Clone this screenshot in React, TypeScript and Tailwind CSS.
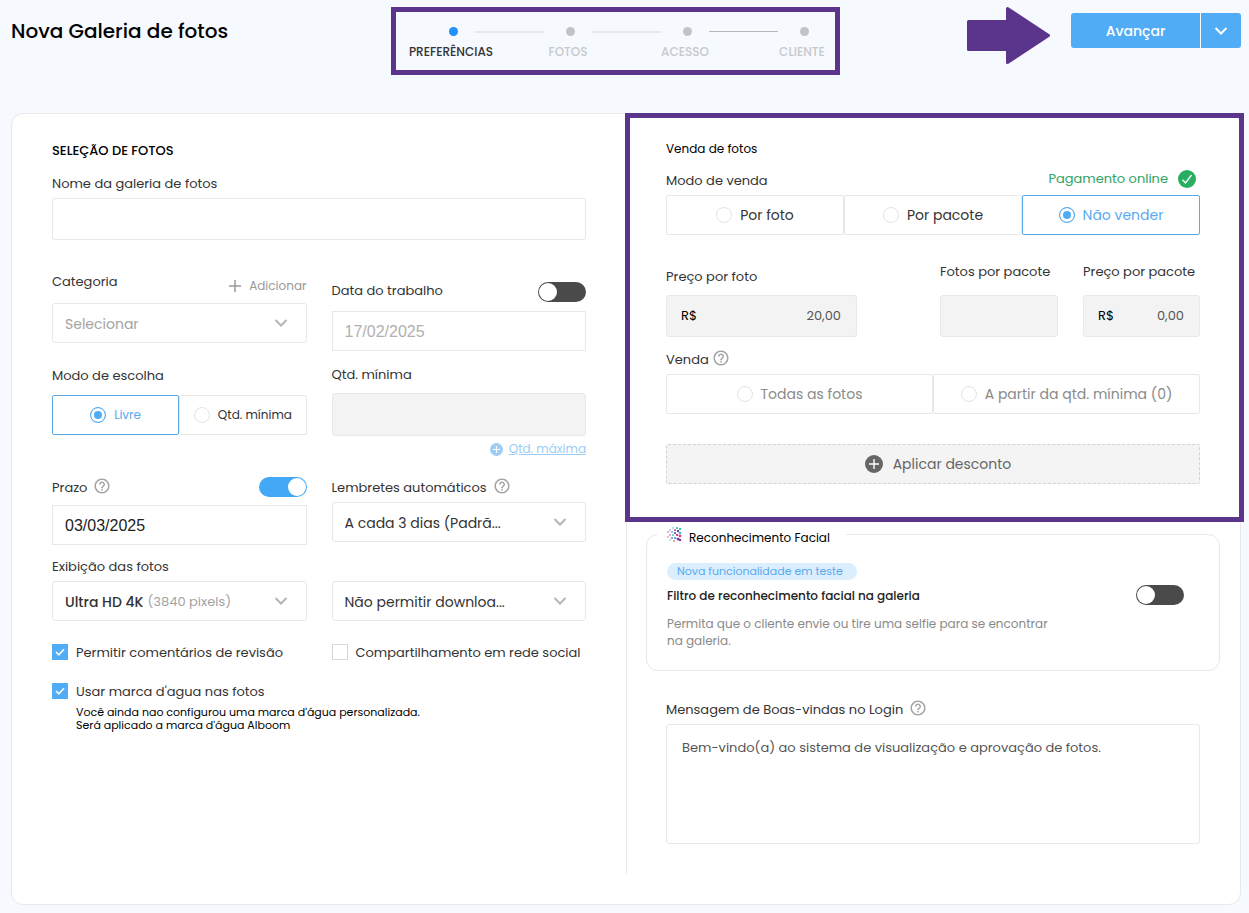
import { useState } from 'react'
import type { ReactNode } from 'react'
import { MdHelpOutline } from 'react-icons/md'
import clsx from 'clsx'

const STEPS = ['PREFERÊNCIAS', 'FOTOS', 'ACESSO', 'CLIENTE']

// Dots of the facial recognition mark: x, y, radius, colour
const FACE_DOTS: [number, number, number, string][] = [
    [6, 1, 0.8, '#7fd0d8'],
    [10, 1, 1, '#4bb8c9'],
    [13, 2, 1.1, '#3fc1b5'],
    [3, 3, 0.8, '#9a9ad8'],
    [8, 3, 1, '#e0559b'],
    [11, 4, 1.1, '#5a4fa0'],
    [1, 5, 0.8, '#e7799f'],
    [5, 5, 0.9, '#6fb7e8'],
    [8, 6, 1, '#7a4ba8'],
    [13, 6, 1.2, '#49b5e0'],
    [3, 8, 0.8, '#c25fae'],
    [6, 8, 0.9, '#5cc9c1'],
    [10, 8, 1.1, '#d9488f'],
    [13, 9, 1.2, '#e2457c'],
    [1, 10, 0.8, '#e98a9a'],
    [5, 11, 0.9, '#7f7ed0'],
    [8, 11, 1, '#3f9fd6'],
    [11, 12, 1.2, '#6a3d98'],
    [13, 13, 1.1, '#8a2f86'],
    [7, 14, 0.8, '#e0559b'],
    [3, 13, 0.8, '#86cfe0'],
]

function Chevron({ className }: { className?: string }) {
    return (
        <svg viewBox="0 0 14 8" className={clsx('w-3.5 h-2 shrink-0 pointer-events-none', className)} fill="none" stroke="currentColor" strokeWidth="2">
            <path d="M1.5 1 7 6.5 12.5 1" />
        </svg>
    )
}

function PlusCircle({ className }: { className: string }) {
    return (
        <svg viewBox="0 0 18 18" className={className}>
            <circle cx="9" cy="9" r="9" fill="currentColor" />
            <path d="M9 4v10M4 9h10" stroke="#fff" strokeWidth="1.4" />
        </svg>
    )
}

function Help() {
    return <MdHelpOutline className="w-[18px] h-[18px] text-[#a3a3a3]" />
}

function Label({ htmlFor, children }: { htmlFor?: string; children: ReactNode }) {
    return (
        <label htmlFor={htmlFor} className="text-[13px] leading-[22px] text-[#333]">
            {children}
        </label>
    )
}

function Toggle({ id, label, defaultChecked }: { id: string; label: string; defaultChecked?: boolean }) {
    return (
        <input
            id={id}
            type="checkbox"
            role="switch"
            aria-label={label}
            defaultChecked={defaultChecked}
            className="appearance-none w-12 h-5 shrink-0 p-px rounded-full bg-[#4a4a4a] cursor-pointer before:block before:w-[18px] before:h-[18px] before:rounded-full before:bg-white checked:bg-[#43a9f7] checked:before:translate-x-7"
        />
    )
}

type SelectBoxProps = {
    id: string
    option: string
    label?: string
    hint?: string
    className?: string
}

function SelectBox({ id, option, label, hint, className }: SelectBoxProps) {
    return (
        <div className={clsx('flex items-center h-10 pl-3 pr-[18px] border border-[#e8e8e8] rounded-[3px] bg-white text-sm', className)}>
            <select
                id={id}
                aria-label={label}
                className={clsx('appearance-none min-w-0 pt-0.5 bg-transparent outline-none', hint ? 'field-sizing-content font-medium' : 'flex-1')}
            >
                <option>{option}</option>
            </select>
            {hint && <span className="ml-1 pt-0.5 text-[13px] text-[#a3a3a3]">{hint}</span>}
            <Chevron className="ml-auto text-[#b5b5b5]" />
        </div>
    )
}

type RadioGroupProps = {
    name: string
    legend: string
    options: string[]
    initial?: string
    small?: boolean
    muted?: boolean
    className?: string
}

function RadioGroup({ name, legend, options, initial, small, muted, className }: RadioGroupProps) {
    const [value, setValue] = useState(initial)

    return (
        <div role="radiogroup" aria-label={legend} className={clsx('flex', className)}>
            {options.map((option) => (
                <label
                    key={option}
                    className={clsx(
                        'flex flex-1 items-center justify-center gap-2 h-10 border rounded-[2px] cursor-pointer whitespace-nowrap',
                        small ? 'text-xs' : 'text-sm',
                        value === option ? 'border-[#5aa9e6] text-[#5aaaf0]' : 'border-[#e8e8e8]',
                        value !== option && (muted ? 'text-[#8a8a8a]' : 'text-[#333]')
                    )}
                >
                    <input
                        type="radio"
                        name={name}
                        checked={value === option}
                        onChange={() => setValue(option)}
                        className="appearance-none w-4 h-4 rounded-full border border-[#e3e3e3] bg-white checked:border-[#4facf5] checked:bg-[#4facf5] checked:shadow-[inset_0_0_0_3px_#fff]"
                    />
                    {option}
                </label>
            ))}
        </div>
    )
}

function CheckItem({ label, defaultChecked }: { label: string; defaultChecked?: boolean }) {
    return (
        <label className="flex items-start gap-2 text-[13px] leading-[22px] text-[#333] whitespace-nowrap cursor-pointer">
            <span className="grid w-4 h-5 place-items-center">
                <input
                    type="checkbox"
                    defaultChecked={defaultChecked}
                    className="peer [grid-area:1/1] appearance-none w-4 h-4 border border-[#d6d6d6] checked:border-[#4facf5] checked:bg-[#4facf5]"
                />
                <svg viewBox="0 0 10 8" className="[grid-area:1/1] w-2.5 h-2 invisible peer-checked:visible pointer-events-none" fill="none" stroke="#fff" strokeWidth="1.6">
                    <path d="m1 4 2.8 2.8L9 1.2" />
                </svg>
            </span>
            {label}
        </label>
    )
}

function PriceBox({ id, value }: { id: string; value: string }) {
    return (
        <div className="flex items-center h-[42px] pl-3.5 pr-[15px] border border-[#e8e8e8] rounded-[3px] bg-[#f3f3f3] text-[13px]">
            <span className="text-black">R$</span>
            <input id={id} type="text" disabled defaultValue={value} className="min-w-0 flex-1 bg-transparent text-right text-[#555]" />
        </div>
    )
}

function Header() {
    return (
        <header className="flex items-start h-[113px] pt-[7px]">
            <h1 className="w-[380px] pt-2 text-xl leading-8 font-medium text-black">Nova Galeria de fotos</h1>

            {/* Steps */}
            <ol className="flex w-[449px] h-[68px] shrink-0 pl-[27px] pt-[14px] border-[5px] border-[#5b358c]">
                {STEPS.map((step, i) => (
                    <li key={step} className="flex">
                        {i > 0 && (
                            <span
                                className={clsx(
                                    'w-[69px] mt-[5px] -ml-2 -mr-1 shrink-0',
                                    i === 3 ? 'h-px bg-[#b4b8bc]' : 'h-0.5 bg-[#e6e8eb]'
                                )}
                            />
                        )}
                        <span className="flex flex-col items-center w-[60px] pt-px">
                            <span className={clsx('w-[9px] h-[9px] rounded-full', i === 0 ? 'bg-[#1e90ff]' : 'bg-[#c0c4c7]')} />
                            <span className={clsx('mt-1.5 pr-1 text-xs leading-5 font-medium whitespace-nowrap', i === 0 ? 'text-[#333]' : 'text-[#c6c9cc]')}>
                                {step}
                            </span>
                        </span>
                    </li>
                ))}
            </ol>

            <div className="flex items-start ml-auto">
                <svg viewBox="0 0 83 57" className="w-[83px] h-[57px] mr-[21px]" fill="#5b358c" stroke="#5b358c" strokeWidth="3" strokeLinejoin="round">
                    <path d="M1.5 14.5h39v-13L81.5 28.5 40.5 55.5v-13h-39z" />
                </svg>
                <div className="flex gap-px h-[35px] mt-1.5 text-white">
                    <button type="button" className="w-[129px] rounded-l-[3px] bg-[#4facf5] text-sm font-medium">
                        Avançar
                    </button>
                    <button type="button" aria-label="Mais opções" className="flex items-center justify-center w-10 rounded-r-[3px] bg-[#4facf5]">
                        <Chevron />
                    </button>
                </div>
            </div>
        </header>
    )
}

function SelectionSection() {
    return (
        <section className="flex-1 min-w-0 px-10 pt-[27px]">
            <h2 className="text-[13px] leading-5 font-medium text-black">SELEÇÃO DE FOTOS</h2>
            <div className="flex flex-col gap-[3px] mt-3">
                <Label htmlFor="nome">Nome da galeria de fotos</Label>
                <input id="nome" type="text" className="h-[42px] px-3 border border-[#e8e8e8] rounded-[3px] text-sm" />
            </div>

            <div className="grid grid-cols-2 gap-x-[25px] mt-[31px]">
                <div className="flex flex-col gap-[7px]">
                    <div className="flex h-[25px] items-start justify-between">
                        <Label htmlFor="categoria">Categoria</Label>
                        <button type="button" className="flex items-center gap-2 self-end text-xs leading-5 text-[#999]">
                            <svg viewBox="0 0 12 12" className="w-3 h-3" stroke="currentColor" strokeWidth="1.5">
                                <path d="M6 0v12M0 6h12" />
                            </svg>
                            Adicionar
                        </button>
                    </div>
                    <SelectBox id="categoria" option="Selecionar" className="text-[#a3a3a3]" />
                </div>
                <div className="flex flex-col gap-[9px] pt-2">
                    <div className="flex h-[23px] items-end justify-between">
                        <Label htmlFor="data">Data do trabalho</Label>
                        <Toggle id="usar-data" label="Usar data do trabalho" />
                    </div>
                    <input id="data" type="text" placeholder="17/02/2025" className="h-10 w-full px-3 pt-0.5 border border-[#e8e8e8] font-['Liberation_Sans',sans-serif] text-base placeholder:text-[#b0b0b0]" />
                </div>
            </div>

            <div className="grid grid-cols-2 gap-x-[25px] mt-[13px]">
                <div className="flex flex-col gap-2 pt-px">
                    <Label>Modo de escolha</Label>
                    <RadioGroup name="escolha" legend="Modo de escolha" options={['Livre', 'Qtd. mínima']} initial="Livre" small />
                </div>
                <div className="flex flex-col">
                    <Label htmlFor="minima">Qtd. mínima</Label>
                    <input id="minima" type="text" disabled className="h-[43px] mt-[7px] px-3 border border-[#e8e8e8] rounded-[3px] bg-[#f3f3f3] text-sm" />
                    <a href="#maxima" className="flex items-center gap-1.5 self-end mt-[3px] text-xs leading-5 text-[#9bcdf5]">
                        <PlusCircle className="w-[13px] h-[13px]" />
                        <span className="underline">Qtd. máxima</span>
                    </a>
                </div>
            </div>

            <div className="grid grid-cols-2 gap-x-[25px] mt-[18px]">
                <div className="flex flex-col gap-1.5">
                    <div className="flex items-start gap-1.5">
                        <Label htmlFor="prazo">Prazo</Label>
                        <Help />
                        <span className="flex ml-auto">
                            <Toggle id="usar-prazo" label="Usar prazo" defaultChecked />
                        </span>
                    </div>
                    <input id="prazo" type="text" defaultValue="03/03/2025" className="h-10 w-full px-3 pt-0.5 border border-[#e8e8e8] font-['Liberation_Sans',sans-serif] text-base text-[#222]" />
                </div>
                <div className="flex flex-col gap-[3px]">
                    <div className="flex items-start gap-1.5">
                        <Label htmlFor="lembretes">Lembretes automáticos</Label>
                        <Help />
                    </div>
                    <SelectBox id="lembretes" option="A cada 3 dias (Padrã..." />
                </div>
            </div>

            <div className="grid grid-cols-2 items-end gap-x-[25px] mt-[11px]">
                <div className="flex flex-col gap-[3px]">
                    <Label htmlFor="exibicao">Exibição das fotos</Label>
                    <SelectBox id="exibicao" option="Ultra HD 4K" hint="(3840 pixels)" />
                </div>
                <SelectBox id="download" label="Download" option="Não permitir downloa..." />
            </div>

            <div className="grid grid-cols-2 gap-x-[25px] gap-y-[17px] mt-[21px]">
                <CheckItem label="Permitir comentários de revisão" defaultChecked />
                <CheckItem label="Compartilhamento em rede social" />
                <CheckItem label="Usar marca d'agua nas fotos" defaultChecked />
            </div>
            <div className="mt-[3px] pl-6 text-[11px] leading-[13px] text-black">
                <p>Você ainda nao configurou uma marca d'água personalizada.</p>
                <p>Será aplicado a marca d'água Alboom</p>
            </div>
        </section>
    )
}

function SalesSection() {
    return (
        <section className="relative pt-[25px] pb-[37px]">
            {/* Highlight frame around the sales options */}
            <div className="absolute -top-px -bottom-px -left-[41px] -right-11 border-[5px] border-[#5b358c] pointer-events-none" />

            <h2 className="text-xs leading-5 text-black">Venda de fotos</h2>
            <div className="flex items-start justify-between mt-[11px]">
                <Label>Modo de venda</Label>
                <span className="flex items-center gap-2.5 h-[18px] pr-1 text-[13px] text-[#2fa35f]">
                    Pagamento online
                    <svg viewBox="0 0 18 18" className="w-[18px] h-[18px]">
                        <circle cx="9" cy="9" r="9" fill="#27ae60" />
                        <path d="m4.5 9.7 3 3.3L13.5 5" fill="none" stroke="#fff" strokeWidth="1.3" />
                    </svg>
                </span>
            </div>
            <RadioGroup name="venda" legend="Modo de venda" options={['Por foto', 'Por pacote', 'Não vender']} initial="Não vender" className="mt-[3px]" />

            <div className="flex items-end mt-[26px]">
                <div className="flex flex-col gap-[7px] w-[191px]">
                    <Label htmlFor="preco-foto">Preço por foto</Label>
                    <PriceBox id="preco-foto" value="20,00" />
                </div>
                <div className="flex flex-col gap-3 w-[118px] ml-auto whitespace-nowrap">
                    <Label htmlFor="fotos-pacote">Fotos por pacote</Label>
                    <input id="fotos-pacote" type="text" disabled className="h-[42px] px-3 border border-[#e8e8e8] rounded-[3px] bg-[#f3f3f3] text-[13px]" />
                </div>
                <div className="flex flex-col gap-3 w-[117px] ml-[25px] whitespace-nowrap">
                    <Label htmlFor="preco-pacote">Preço por pacote</Label>
                    <PriceBox id="preco-pacote" value="0,00" />
                </div>
            </div>

            <div className="flex items-start gap-[3px] mt-3">
                <Label>Venda</Label>
                <Help />
            </div>
            <RadioGroup name="tipo" legend="Venda" options={['Todas as fotos', 'A partir da qtd. mínima (0)']} muted className="mt-[3px]" />

            <button type="button" className="flex items-center justify-center gap-2.5 w-full h-10 mt-[30px] pl-2.5 border border-dashed border-[#d2d2d2] rounded-[2px] bg-[#f4f4f4] text-sm text-[#666]">
                <PlusCircle className="w-[18px] h-[18px]" />
                Aplicar desconto
            </button>
        </section>
    )
}

function FacialSection() {
    return (
        <fieldset className="-mx-5 px-5 pb-[21px] border border-[#e8e8e8] rounded-xl">
            <legend className="flex items-end h-[27px] gap-[7px] -ml-2.5 pl-2.5 pr-4 text-xs leading-5 text-black">
                <svg viewBox="0 0 15 15" className="w-[15px] h-[15px] mb-1.5">
                    {FACE_DOTS.map(([x, y, r, fill]) => (
                        <rect key={`${x}-${y}`} x={x - r} y={y - r} width={r * 2} height={r * 2} rx="0.4" fill={fill} />
                    ))}
                </svg>
                Reconhecimento Facial
            </legend>
            <div className="flex items-start justify-between pr-[15px]">
                <div>
                    <span className="block w-fit mt-[15px] pl-2.5 pr-3.5 rounded-full bg-[#daeefe] text-[11px] leading-[17px] text-[#5aa9ee]">
                        Nova funcionalidade em teste
                    </span>
                    <label htmlFor="filtro-facial" className="block mt-1.5 text-xs leading-5 font-medium text-[#222]">
                        Filtro de reconhecimento facial na galeria
                    </label>
                    <p className="max-w-[390px] mt-[9px] text-xs leading-[17px] text-[#8a8a8a]">
                        Permita que o cliente envie ou tire uma selfie para se encontrar na galeria.
                    </p>
                </div>
                <span className="flex pt-[37px]">
                    <Toggle id="filtro-facial" label="Filtro de reconhecimento facial" />
                </span>
            </div>
        </fieldset>
    )
}

export default function App() {
    return (
        <div className="min-h-screen pl-[11px] pr-2 pb-2 bg-[#f6f9fe] font-['Poppins','Inter',sans-serif] text-[#333]">
            <Header />
            <main className="flex pb-[30px] border border-[#e8e8ea] rounded-xl bg-white">
                <SelectionSection />
                <div className="flex-1 min-w-0 pl-[39px] pr-10 pb-[30px] border-l border-[#e8e8e8]">
                    <SalesSection />
                    <FacialSection />
                    <div className="flex items-start gap-1.5 mt-7">
                        <Label htmlFor="mensagem">Mensagem de Boas-vindas no Login</Label>
                        <Help />
                    </div>
                    <textarea
                        id="mensagem"
                        defaultValue="Bem-vindo(a) ao sistema de visualização e aprovação de fotos."
                        className="block w-full h-[120px] mt-[3px] px-[15px] py-[13px] border border-[#e8e8e8] rounded-[3px] resize-none text-[13px] leading-5 text-[#555]"
                    />
                </div>
            </main>
        </div>
    )
}
